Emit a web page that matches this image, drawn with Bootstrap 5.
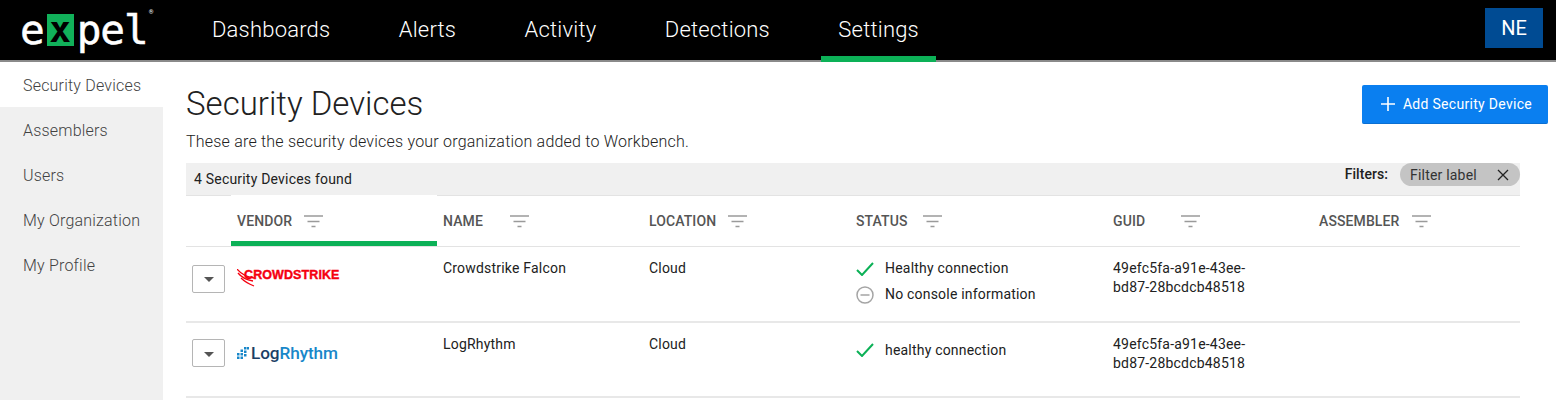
<!DOCTYPE html>
<html lang="en">
<head>
<meta charset="utf-8">
<title>Security Devices</title>
<link href="https://cdn.jsdelivr.net/npm/bootstrap@5.3.0/dist/css/bootstrap.min.css" rel="stylesheet">
<style>
html,body{height:400px;overflow:hidden}
body{font-family:Roboto,"Liberation Sans",sans-serif;font-size:14px;color:#212121;background:#fff}
.topbar{height:62px;background:#000;border-bottom:2px solid #8a8a8a;padding:0 13px 0 20px}
.brand{width:159px;height:60px;font-family:"DejaVu Sans Mono",monospace;font-size:41px;line-height:1;color:#fff;text-decoration:none;font-weight:400;-webkit-text-stroke:.5px #fff}
.brand:hover{color:#fff}
.brand-x{display:inline-flex;align-items:center;justify-content:center;width:27px;height:32px;background:#11b15a;color:#000;-webkit-text-stroke:0;font-weight:700;font-size:36px;margin:0 3px 0 2px}
.brand-pel{letter-spacing:-1px}
.brand-tm{font-family:Roboto,sans-serif;font-size:6px;-webkit-text-stroke:0;align-self:flex-start;margin:9px 0 0 1px}
.mainnav{height:60px}
.mainnav .nav-link{height:62px;padding:15px 17px 0;margin-right:34.4px;color:#fff;font-weight:300;font-size:22px;line-height:30px;letter-spacing:.2px;border-bottom:6px solid transparent}
.mainnav .nav-link.active{border-bottom-color:#0cb157;color:#fff}
.avatar-ne{width:58px;height:40px;background:#004b93;color:#fff;font-size:20px;border-radius:0}
.layout{height:338px}
.sidenav{width:163px;background:#f0f0f0;flex:none}
.sidenav .nav-link{height:45px;padding:2px 0 0 23px;color:#424242;font-weight:300;font-size:16px;line-height:44px;letter-spacing:.2px}
.sidenav .nav-link.active{background:#fff}
.content{padding:0 8px 0 23px;min-width:0}
.page-head{height:101px}
.page-title{font-size:33px;font-weight:300;line-height:38px;margin:23px 0 0;color:#212121}
.page-sub{font-size:16px;font-weight:300;line-height:20px;margin:9px 0 0;color:#212121;letter-spacing:.21px}
.add-btn{width:186px;height:39px;margin-top:23px;background:#0a7ff0;border:0;border-bottom:1px solid #0a6fd2;border-radius:2px;color:#fff;font-size:14px;letter-spacing:.3px;font-weight:400;padding:0 0 0 3px;gap:8px}
.add-btn:hover{background:#0a7ff0;color:#fff}
.tablewrap{width:1334px}
.filterbar{height:33px;background:#f0f0f0;border-bottom:1px solid #e3e3e3;padding:0 0 0 8px}
.found{font-size:14px;line-height:16px;padding-top:8px;letter-spacing:.2px}
.filters-lbl{font-size:14px;font-weight:500;line-height:23px;margin-right:12px;color:#212121;letter-spacing:.05px}
.chip{width:120px;height:23px;border-radius:12px;background:#c4c4c4;padding:1px 11px 0 10px;font-size:14px;color:#333;letter-spacing:.2px}
.dev-table{table-layout:fixed;width:1334px;margin:0;border-collapse:collapse}
.dev-table>:not(caption)>*>*{padding:0;border-bottom:2px solid #e8e8e8;background:transparent;box-shadow:none;color:#212121}
.c0{width:45px}.c1,.c2{width:206px}.c3{width:207px}.c4{width:257px}.c5{width:206px}.c6{width:207px}
.dev-table thead th{height:50px;padding:1px 6px 0;font-size:14px;font-weight:500;color:#555;vertical-align:middle;letter-spacing:.1px;border-bottom-width:1px;border-bottom-color:#e3e3e3}
.dev-table thead th.sorted{position:relative}
.dev-table thead th.sorted::before{content:"";position:absolute;left:0;right:0;top:-1px;height:1px;background:#fff}
.dev-table thead th.sorted::after{content:"";position:absolute;left:0;right:0;bottom:0;height:5px;background:#0cb157}
.dev-table td{padding:12px 6px 0;font-size:14px;line-height:19px;vertical-align:top;letter-spacing:.2px}
.row-a td{height:76px}
.row-b td{height:75px}
.th-lbl{display:inline-block;vertical-align:middle}
.fico{vertical-align:middle}
.fv{margin-left:12px}.fn{margin-left:27px}.fl{margin-left:12px}.fs{margin-left:15px}.fg{margin-left:36px}.fa{margin-left:13px}
.expander{width:33px;height:28px;background:#fff;border:1px solid #b5b5b5;border-radius:2px;margin:18px 0 0 6px;padding:2px 0 0}
.row-b .expander{margin-top:16px}
.caret-dn{display:block;width:0;height:0;border-left:5.5px solid transparent;border-right:5.5px solid transparent;border-top:5.5px solid #555}
.stat{height:26px;gap:11px}
.stat:first-child{margin-top:-3px}
.row-b .stat:first-child{margin-top:2px}
.stat svg{flex:none}
.cs-wrap{margin-top:10px}
.cs-wrap svg{margin-right:-12px}
.cs-logo{color:#f5000f;font-weight:700;font-size:12.5px;line-height:14px;font-family:"Liberation Sans",sans-serif;letter-spacing:.1px;-webkit-text-stroke:.4px #f5000f;margin-top:-1px;position:relative}
.lr-wrap{margin-top:8px;gap:2px}
.lr-logo{font-size:17.200px;font-weight:500;line-height:20px;color:#1b3f66;letter-spacing:-.1px}
.lr-logo em{font-style:normal;color:#1887c9;font-weight:500}
</style>
</head>
<body>
<nav class="topbar d-flex align-items-start">
  <a class="brand d-flex align-items-center" href="#"><span>e</span><span class="brand-x">x</span><span class="brand-pel">pel</span><span class="brand-tm">®</span></a>
  <ul class="nav mainnav flex-grow-1 ms-3">
    <li class="nav-item"><a class="nav-link" href="#">Dashboards</a></li>
    <li class="nav-item"><a class="nav-link" href="#">Alerts</a></li>
    <li class="nav-item"><a class="nav-link" href="#">Activity</a></li>
    <li class="nav-item"><a class="nav-link" href="#">Detections</a></li>
    <li class="nav-item"><a class="nav-link active" href="#">Settings</a></li>
  </ul>
  <button class="btn avatar-ne d-flex align-items-center justify-content-center mt-2 p-0">NE</button>
</nav>
<div class="layout d-flex">
  <aside class="sidenav">
    <nav class="nav flex-column">
      <a class="nav-link active" href="#">Security Devices</a>
      <a class="nav-link" href="#">Assemblers</a>
      <a class="nav-link" href="#">Users</a>
      <a class="nav-link" href="#">My Organization</a>
      <a class="nav-link" href="#">My Profile</a>
    </nav>
  </aside>
  <main class="content flex-grow-1">
    <div class="page-head d-flex justify-content-between align-items-start">
      <div>
        <h1 class="page-title">Security Devices</h1>
        <p class="page-sub">These are the security devices your organization added to Workbench.</p>
      </div>
      <button class="btn add-btn d-flex align-items-center justify-content-center">
        <svg width="14" height="14" viewBox="0 0 14 14"><path d="M7 0v14M0 7h14" stroke="#fff" stroke-width="1.6"/></svg>
        <span>Add Security Device</span>
      </button>
    </div>
    <div class="tablewrap">
      <div class="filterbar d-flex justify-content-between">
        <div class="found">4 Security Devices found</div>
        <div class="d-flex align-items-start">
          <span class="filters-lbl">Filters:</span>
          <span class="chip d-flex align-items-center justify-content-between">Filter label
            <svg width="12" height="12" viewBox="0 0 12 12"><path d="M1 1l10 10M11 1L1 11" stroke="#222" stroke-width="1.3"/></svg>
          </span>
        </div>
      </div>
      <table class="table dev-table">
        <colgroup><col class="c0"><col class="c1"><col class="c2"><col class="c3"><col class="c4"><col class="c5"><col class="c6"></colgroup>
        <thead>
          <tr>
            <th></th>
            <th class="sorted"><span class="th-lbl">VENDOR</span><svg class="fico fv" width="19" height="13" viewBox="0 0 19 13"><path d="M0 1h19M3.5 6.500h12M7.500 11.500h4" stroke="#9a9a9a" stroke-width="1.600"/></svg></th>
            <th><span class="th-lbl">NAME</span><svg class="fico fn" width="19" height="13" viewBox="0 0 19 13"><path d="M0 1h19M3.5 6.500h12M7.500 11.500h4" stroke="#9a9a9a" stroke-width="1.600"/></svg></th>
            <th><span class="th-lbl">LOCATION</span><svg class="fico fl" width="19" height="13" viewBox="0 0 19 13"><path d="M0 1h19M3.5 6.500h12M7.500 11.500h4" stroke="#9a9a9a" stroke-width="1.600"/></svg></th>
            <th><span class="th-lbl">STATUS</span><svg class="fico fs" width="19" height="13" viewBox="0 0 19 13"><path d="M0 1h19M3.5 6.500h12M7.500 11.500h4" stroke="#9a9a9a" stroke-width="1.600"/></svg></th>
            <th><span class="th-lbl">GUID</span><svg class="fico fg" width="19" height="13" viewBox="0 0 19 13"><path d="M0 1h19M3.5 6.500h12M7.500 11.500h4" stroke="#9a9a9a" stroke-width="1.600"/></svg></th>
            <th><span class="th-lbl">ASSEMBLER</span><svg class="fico fa" width="19" height="13" viewBox="0 0 19 13"><path d="M0 1h19M3.5 6.500h12M7.500 11.500h4" stroke="#9a9a9a" stroke-width="1.600"/></svg></th>
          </tr>
        </thead>
        <tbody>
          <tr class="row-a">
            <td class="p-0"><button class="btn expander d-flex align-items-center justify-content-center" aria-label="Expand"><span class="caret-dn"></span></button></td>
            <td>
              <div class="cs-wrap d-flex align-items-start">
                <svg width="19" height="18" viewBox="0 0 19 18"><g fill="none" stroke="#f5000f" stroke-width="1.300"><path d="M0 0C4 5 10 8 17 9"/><path d="M1 4C5 9 10 11 16 12"/><path d="M4 9C8 13 12 15 17 17"/></g></svg>
                <span class="cs-logo">CROWDSTRIKE</span>
              </div>
            </td>
            <td>Crowdstrike Falcon</td>
            <td>Cloud</td>
            <td>
              <div class="stat d-flex align-items-center">
                <svg width="18" height="14" viewBox="0 0 18 14"><path d="M1 8l5 5L17 1" fill="none" stroke="#0cb157" stroke-width="2"/></svg>
                <span>Healthy connection</span>
              </div>
              <div class="stat d-flex align-items-center">
                <svg width="18" height="18" viewBox="0 0 18 18"><circle cx="9" cy="9" r="8" fill="none" stroke="#a5a5a5" stroke-width="1.500"/><path d="M4.500 9h9" stroke="#a5a5a5" stroke-width="1.500"/></svg>
                <span>No console information</span>
              </div>
            </td>
            <td>49efc5fa-a91e-43ee-<br>bd87-28bcdcb48518</td>
            <td></td>
          </tr>
          <tr class="row-b">
            <td class="p-0"><button class="btn expander d-flex align-items-center justify-content-center" aria-label="Expand"><span class="caret-dn"></span></button></td>
            <td>
              <div class="lr-wrap d-flex align-items-center">
                <svg width="12" height="12" viewBox="0 0 12 12"><g fill="#1887c9"><rect x="0" y="6" width="2.500" height="2.500"/><rect x="0" y="9.500" width="2.500" height="2.500"/><rect x="3.500" y="2.500" width="2.500" height="2.500"/><rect x="3.500" y="6" width="2.500" height="2.500"/><rect x="3.500" y="9.500" width="2.500" height="2.500"/><rect x="7" y="0" width="2.500" height="2.500"/><rect x="7" y="3.500" width="2.500" height="2.500"/><rect x="7" y="7" width="2.500" height="2.500"/><rect x="10" y="0" width="2" height="2.500"/></g></svg>
                <span class="lr-logo">Log<em>Rhythm</em></span>
              </div>
            </td>
            <td>LogRhythm</td>
            <td>Cloud</td>
            <td>
              <div class="stat d-flex align-items-center">
                <svg width="18" height="14" viewBox="0 0 18 14"><path d="M1 8l5 5L17 1" fill="none" stroke="#0cb157" stroke-width="2"/></svg>
                <span>healthy connection</span>
              </div>
            </td>
            <td>49efc5fa-a91e-43ee-<br>bd87-28bcdcb48518</td>
            <td></td>
          </tr>
        </tbody>
      </table>
    </div>
  </main>
</div>
<script src="https://cdn.jsdelivr.net/npm/bootstrap@5.3.0/dist/js/bootstrap.bundle.min.js"></script>
</body>
</html>
